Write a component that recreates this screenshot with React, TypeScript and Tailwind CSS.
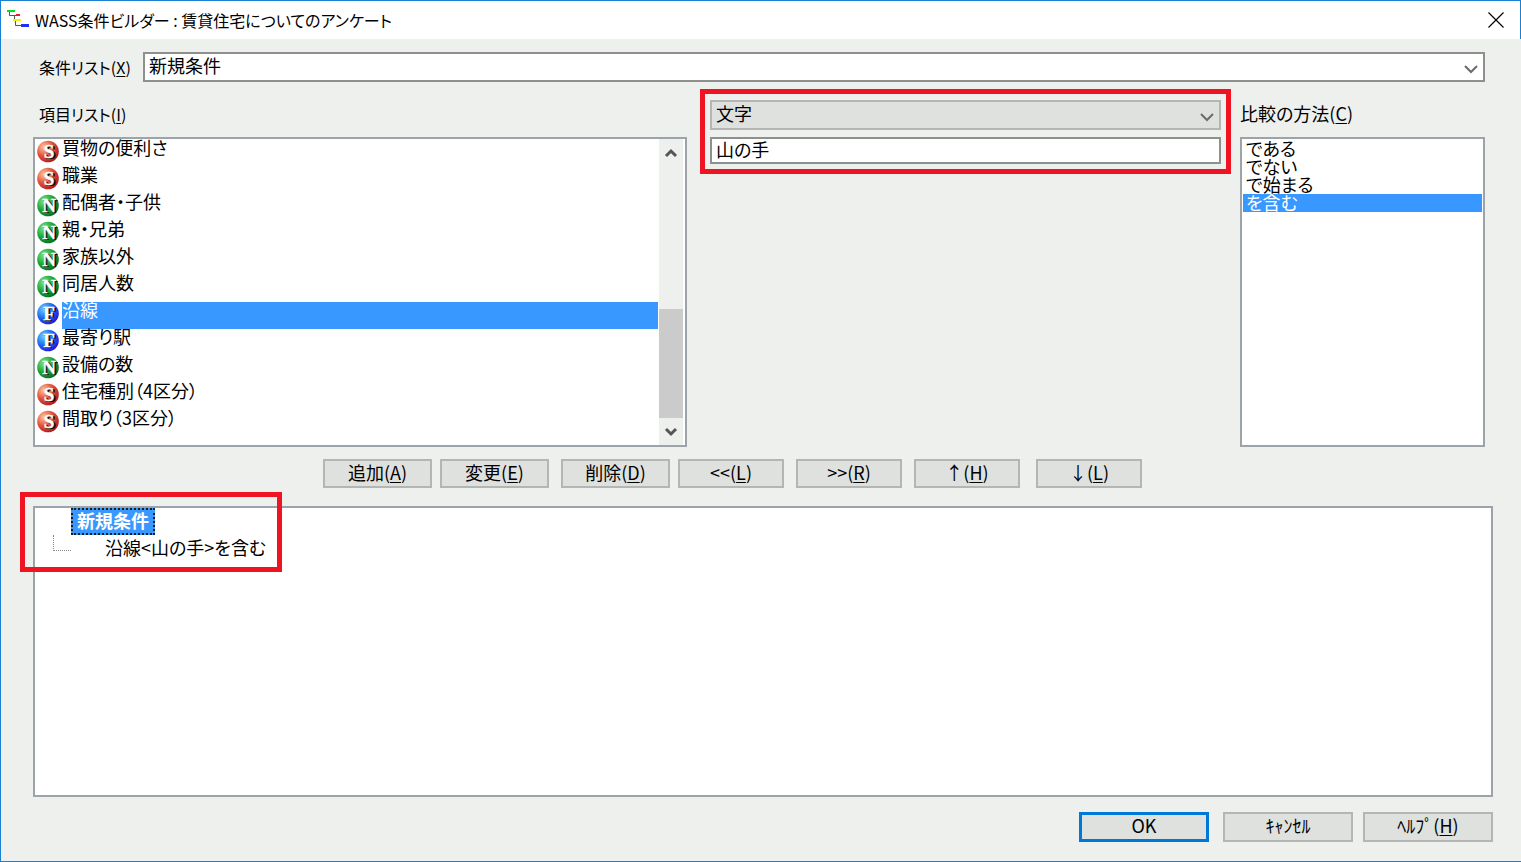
import { useState } from "react"
import type { ReactNode } from "react"

type Kind = "S" | "N" | "F"

const items: { kind: Kind; name: string }[] = [
  { kind: "S", name: "買物の便利さ" },
  { kind: "S", name: "職業" },
  { kind: "N", name: "配偶者・子供" },
  { kind: "N", name: "親・兄弟" },
  { kind: "N", name: "家族以外" },
  { kind: "N", name: "同居人数" },
  { kind: "F", name: "沿線" },
  { kind: "F", name: "最寄り駅" },
  { kind: "N", name: "設備の数" },
  { kind: "S", name: "住宅種別（4区分）" },
  { kind: "S", name: "間取り（3区分）" },
]

const comparisons = ["である", "でない", "で始まる", "を含む"]

const ballColors = {
  S: ["#ffc9a0", "#e0523c", "#b01c1c"],
  N: ["#7fe68a", "#1fa83a", "#04701c"],
  F: ["#6fd0ff", "#1f6cf0", "#2418d8"],
}

function Ball({ kind }: { kind: Kind }) {
  const [light, mid, dark] = ballColors[kind]
  return (
    <svg width="22" height="23" viewBox="0 0 22 23" className="shrink-0" aria-hidden="true">
      <defs>
        <radialGradient id={`ball-${kind}`} cx="0.32" cy="0.3" r="0.75">
          <stop offset="0" stopColor={light} />
          <stop offset="0.55" stopColor={mid} />
          <stop offset="1" stopColor={dark} />
        </radialGradient>
      </defs>
      <circle cx="11" cy="11.5" r="10.8" fill={`url(#ball-${kind})`} />
      <g fontFamily="'Liberation Serif', serif" fontWeight="700" fontSize="19" textAnchor="middle">
        <text x="13" y="19" fill="#111">{kind}</text>
        <text x="14" y="19" fill="#111">{kind}</text>
        <text x="12" y="18" fill="#fff" stroke="#fff" strokeWidth="0.4">{kind}</text>
      </g>
    </svg>
  )
}

function Chevron({ up = false, bold = false }: { up?: boolean; bold?: boolean }) {
  return (
    <svg width="14" height="10" viewBox="0 0 14 10" fill="none" aria-hidden="true">
      <path
        d={up ? "M2 8L7 3L12 8" : bold ? "M2 2L7 7L12 2" : "M1 2L7 8L13 2"}
        stroke={bold ? "#555" : "#6b6b6b"}
        strokeWidth={bold ? 3 : 2}
      />
    </svg>
  )
}

// Access key shown after a label, e.g. (X)
function Key({ k }: { k: string }) {
  return (
    <>
      (<span className="underline decoration-1 underline-offset-2">{k}</span>)
    </>
  )
}

function Combo({ id, label, options, className }: { id: string; label?: string; options: string[]; className: string }) {
  return (
    <div className="relative min-w-0 flex-1">
      <select
        id={id}
        aria-label={label}
        className={`block h-[30px] w-full appearance-none border-2 px-1 pb-1 leading-[20px] outline-none ${className}`}
      >
        {options.map((o) => (
          <option key={o}>{o}</option>
        ))}
      </select>
      <span className="pointer-events-none absolute inset-y-0 right-[7px] flex items-center pt-1">
        <Chevron />
      </span>
    </div>
  )
}

function PushButton({ children, className }: { children: ReactNode; className: string }) {
  return (
    <button
      type="button"
      className={`flex items-center justify-center bg-[#dfe1df] pb-1 whitespace-nowrap hover:bg-[#e5f1fb] ${className}`}
    >
      <span>{children}</span>
    </button>
  )
}

export default function App() {
  const [item, setItem] = useState("沿線")
  const [comparison, setComparison] = useState("を含む")
  const [value, setValue] = useState("山の手")

  return (
    <div className="flex min-h-screen flex-col border-t border-b border-l border-[#1a80d2] bg-[#eef0ee] font-['Noto_Sans_CJK_JP',sans-serif] text-[18px] leading-[20px] text-black [font-feature-settings:'palt']">
      <header className="flex h-[38px] items-center border-r border-[#1a80d2] bg-white pr-3.5 pl-1.5">
        <svg width="22" height="20" viewBox="0 0 22 20" className="shrink-0" aria-hidden="true">
          <path d="M2.5 2V5.5H11M7.5 6V10.5M8.5 11V15.5H14" fill="none" stroke="#555" strokeWidth="1" />
          <rect x="0" y="0" width="8" height="2" fill="#00e020" />
          <rect x="9" y="4" width="4" height="2" fill="#f01828" />
          <rect x="6" y="9" width="8" height="2" fill="#ffee00" />
          <rect x="14" y="14" width="8" height="3" fill="#2030ff" />
        </svg>
        <h1 className="ml-1.5 flex-1 text-[16px]">WASS条件ビルダー : 賃貸住宅についてのアンケート</h1>
        <button type="button" aria-label="閉じる" className="flex size-5 items-center justify-center">
          <svg width="16" height="16" viewBox="0 0 16 16" aria-hidden="true">
            <path d="M0.5 0.5L15.5 15.5M15.5 0.5L0.5 15.5" stroke="#000" strokeWidth="1.2" />
          </svg>
        </button>
      </header>

      <main className="flex flex-1 flex-col pt-[13px] pr-7 pb-[19px] pl-8">
        <div className="flex items-center pr-2">
          <label htmlFor="condition" className="w-[110px] shrink-0 pl-1.5 text-[16px]">
            条件リスト<Key k="X" />
          </label>
          <Combo id="condition" options={["新規条件"]} className="border-[#8e908e] bg-white" />
        </div>

        <div className="mt-[7px] flex pr-2">
          <section className="flex min-w-0 flex-[654] flex-col">
            <h2 id="items-label" className="flex h-12 items-center pt-0.5 pl-1.5 text-[16px]">
              <span>
                項目リスト<Key k="I" />
              </span>
            </h2>
            <div className="flex h-[310px] border-2 border-[#9ca3a9] bg-white">
              <ul role="listbox" aria-labelledby="items-label" className="min-w-0 flex-1 pt-px pl-0.5">
                {items.map(({ kind, name }) => (
                  <li key={name} role="option" aria-selected={item === name} className="flex h-[27px]">
                    <Ball kind={kind} />
                    <button
                      type="button"
                      onClick={() => setItem(name)}
                      className={`ml-[3px] flex flex-1 items-start text-left leading-[14px] ${
                        item === name ? "bg-[#3898ff] text-white" : ""
                      }`}
                    >
                      {name}
                    </button>
                  </li>
                ))}
              </ul>
              <div className="mr-0.5 ml-px flex w-6 flex-col items-center bg-[#eef0ee]">
                <button type="button" aria-label="上へスクロール" className="flex h-[27px] items-center">
                  <Chevron up bold />
                </button>
                <div className="flex-[144]" />
                <div className="w-full flex-[109] bg-[#cacbca]" />
                <button type="button" aria-label="下へスクロール" className="flex h-[27px] items-center">
                  <Chevron bold />
                </button>
              </div>
            </div>
          </section>

          <section className="ml-[13px] flex min-w-0 flex-[531] flex-col">
            <div className="flex flex-col gap-[7px] border-[5px] border-[#f01422] px-[5px] pt-1.5 pb-[5px]">
              <Combo
                id="value-type"
                label="値の種類"
                options={["文字"]}
                className="border-[#b4b6b4] bg-[#dfe1df]"
              />
              <input
                type="text"
                aria-label="値"
                value={value}
                onChange={(e) => setValue(e.target.value)}
                className="h-[27px] w-full border-2 border-[#8e908e] bg-white px-1 pb-1 leading-[20px] outline-none"
              />
            </div>
          </section>

          <section className="ml-[9px] flex min-w-0 flex-[245] flex-col">
            <h2 id="comparison-label" className="flex h-12 items-center">
              <span>
                比較の方法<Key k="C" />
              </span>
            </h2>
            <ul
              role="listbox"
              aria-labelledby="comparison-label"
              className="h-[310px] border-2 border-[#9ca3a9] bg-white px-px pt-px"
            >
              {comparisons.map((c) => (
                <li key={c} role="option" aria-selected={comparison === c}>
                  <button
                    type="button"
                    onClick={() => setComparison(c)}
                    className={`block h-[18px] w-full pb-0.5 pl-[3px] text-left leading-[16px] ${
                      comparison === c ? "bg-[#3898ff] text-white" : ""
                    }`}
                  >
                    {c}
                  </button>
                </li>
              ))}
            </ul>
          </section>
        </div>

        <div className="mt-3 flex pl-[290px]">
          <PushButton className="h-[29px] w-[109px] border-2 border-[#b4b6b4]">追加<Key k="A" /></PushButton>
          <PushButton className="ml-2 h-[29px] w-[109px] border-2 border-[#b4b6b4]">変更<Key k="E" /></PushButton>
          <PushButton className="ml-3 h-[29px] w-[109px] border-2 border-[#b4b6b4]">削除<Key k="D" /></PushButton>
          <PushButton className="ml-2 h-[29px] w-[106px] border-2 border-[#b4b6b4]">&lt;&lt;<Key k="L" /></PushButton>
          <PushButton className="ml-3 h-[29px] w-[106px] border-2 border-[#b4b6b4]">&gt;&gt;<Key k="R" /></PushButton>
          <PushButton className="ml-3 h-[29px] w-[106px] border-2 border-[#b4b6b4]">↑<Key k="H" /></PushButton>
          <PushButton className="ml-4 h-[29px] w-[106px] border-2 border-[#b4b6b4]">↓<Key k="L" /></PushButton>
        </div>

        <div className="relative mt-[18px] flex-1 border-2 border-[#9ca3a9] bg-white">
          <ul role="tree" aria-label="条件" className="pl-9">
            <li role="treeitem" aria-expanded="true">
              <button
                type="button"
                className="block h-[27px] border-2 border-dotted border-[#1c1c1c] bg-[#3898ff] px-1 pb-1 leading-[20px] font-bold text-white"
              >
                新規条件
              </button>
              <ul role="group" className="-ml-[18px] flex">
                <li aria-hidden="true" className="h-4 w-[18px] border-b border-l border-dotted border-[#888]" />
                <li role="treeitem" className="ml-[34px] pt-0.5">沿線&lt;山の手&gt;を含む</li>
              </ul>
            </li>
          </ul>
          <div className="pointer-events-none absolute -top-4 -left-[15px] h-20 w-[262px] border-[5px] border-[#f01422]" />
        </div>

        <div className="mt-[15px] flex justify-end">
          <PushButton className="h-[30px] w-[130px] border-3 border-[#0078d7]">OK</PushButton>
          <PushButton className="ml-3.5 h-[30px] w-[130px] border-2 border-[#b4b6b4]">ｷｬﾝｾﾙ</PushButton>
          <PushButton className="ml-2.5 h-[30px] w-[130px] border-2 border-[#b4b6b4]">ﾍﾙﾌﾟ<Key k="H" /></PushButton>
        </div>
      </main>
    </div>
  )
}
